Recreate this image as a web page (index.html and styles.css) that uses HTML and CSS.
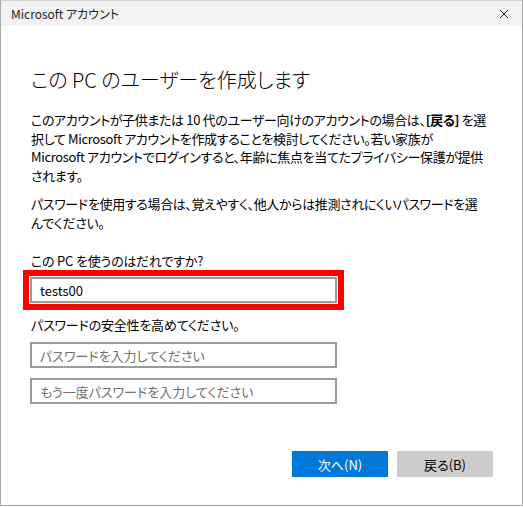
FILE: index.html
```html
<!DOCTYPE html>
<html lang="ja">
<head>
    <meta charset="UTF-8">
    <meta name="viewport" content="width=device-width, initial-scale=1.0">
    <title>Microsoft アカウント</title>
    <link rel="stylesheet" href="styles.css">
</head>
<body>
    <div class="window">
        <div class="titlebar">
            <span class="title">Microsoft アカウント</span>
            <svg class="close" width="10" height="10" viewBox="0 0 10 10">
                <path d="M1 1 L9 9 M9 1 L1 9" stroke="#222" stroke-width="1" fill="none"/>
            </svg>
        </div>

        <div class="content">
            <h1>この PC のユーザーを作成します</h1>

            <p class="intro">
                このアカウントが子供または 10 代のユーザー向けのアカウントの場合は、<b>[戻る]</b> を選<br>
                択して Microsoft アカウントを作成することを検討してください。若い家族が<br>
                Microsoft アカウントでログインすると、年齢に焦点を当てたプライバシー保護が提供<br>
                されます。
            </p>

            <p class="hint">
                パスワードを使用する場合は、覚えやすく、他人からは推測されにくいパスワードを選<br>
                んでください。
            </p>

            <label class="label" for="user">この PC を使うのはだれですか?</label>
            <input class="field marked" type="text" id="user" value="tests00">

            <label class="label label-pw" for="pw">パスワードの安全性を高めてください。</label>
            <input class="field" type="password" id="pw" placeholder="パスワードを入力してください">
            <input class="field field-gap" type="password" id="pw2" placeholder="もう一度パスワードを入力してください">

            <div class="actions">
                <button class="btn btn-primary">次へ(N)</button>
                <button class="btn">戻る(B)</button>
            </div>
        </div>
    </div>
</body>
</html>
```

FILE: styles.css
```css
* {
    margin: 0;
    padding: 0;
    box-sizing: border-box;
    font-family: "Noto Sans CJK JP", "Noto Sans", sans-serif;
    font-feature-settings: "palt";
}

body {
    background-color: #fff;
    overflow: hidden;
}

.window {
    width: 523px;
    height: 506px;
    border: 1px solid #a8a8a8;
    border-top-color: #d0d0d0;
    background-color: #fff;
}

.titlebar {
    height: 25px;
    background-color: #f2f2f2;
    display: flex;
    align-items: center;
    justify-content: space-between;
    padding: 0 13px 0 10px;
}

.title {
    font-size: 12px;
    color: #222;
}

.content {
    padding: 40px 29px 0 30px;
}

h1 {
    font-size: 20px;
    font-weight: 300;
    line-height: 28px;
    color: #000;
    margin-bottom: 17px;
}

.intro,
.hint {
    font-size: 13px;
    line-height: 18.5px;
    letter-spacing: -0.35px;
    white-space: nowrap;
    color: #000;
}

.intro b {
    font-weight: bold;
}

.intro {
    margin-bottom: 10px;
}

.hint {
    margin-bottom: 20px;
}

.label {
    display: block;
    font-size: 13px;
    line-height: 18px;
    letter-spacing: -0.2px;
    color: #000;
    margin-bottom: 7px;
}

.label-pw {
    margin-top: 13px;
    margin-bottom: 8px;
}

.field {
    display: block;
    width: 307px;
    height: 26px;
    margin-left: -1px;
    border: 2px solid #9a9a9a;
    padding: 0 8px;
    font-size: 13px;
    color: #000;
    background-color: #fff;
}

.field::placeholder {
    color: #6e6e6e;
}

/* red highlight round the user name box */
.marked {
    outline: 6px solid #f00;
    outline-offset: 1px;
}

.field-gap {
    margin-top: 10px;
}

.actions {
    display: flex;
    justify-content: flex-end;
    gap: 9px;
    margin-top: 47px;
}

.btn {
    width: 96px;
    height: 26px;
    border: none;
    background-color: #cccccc;
    color: #000;
    font-size: 13px;
}

.btn-primary {
    background-color: #0078d7;
    color: #fff;
}
```
